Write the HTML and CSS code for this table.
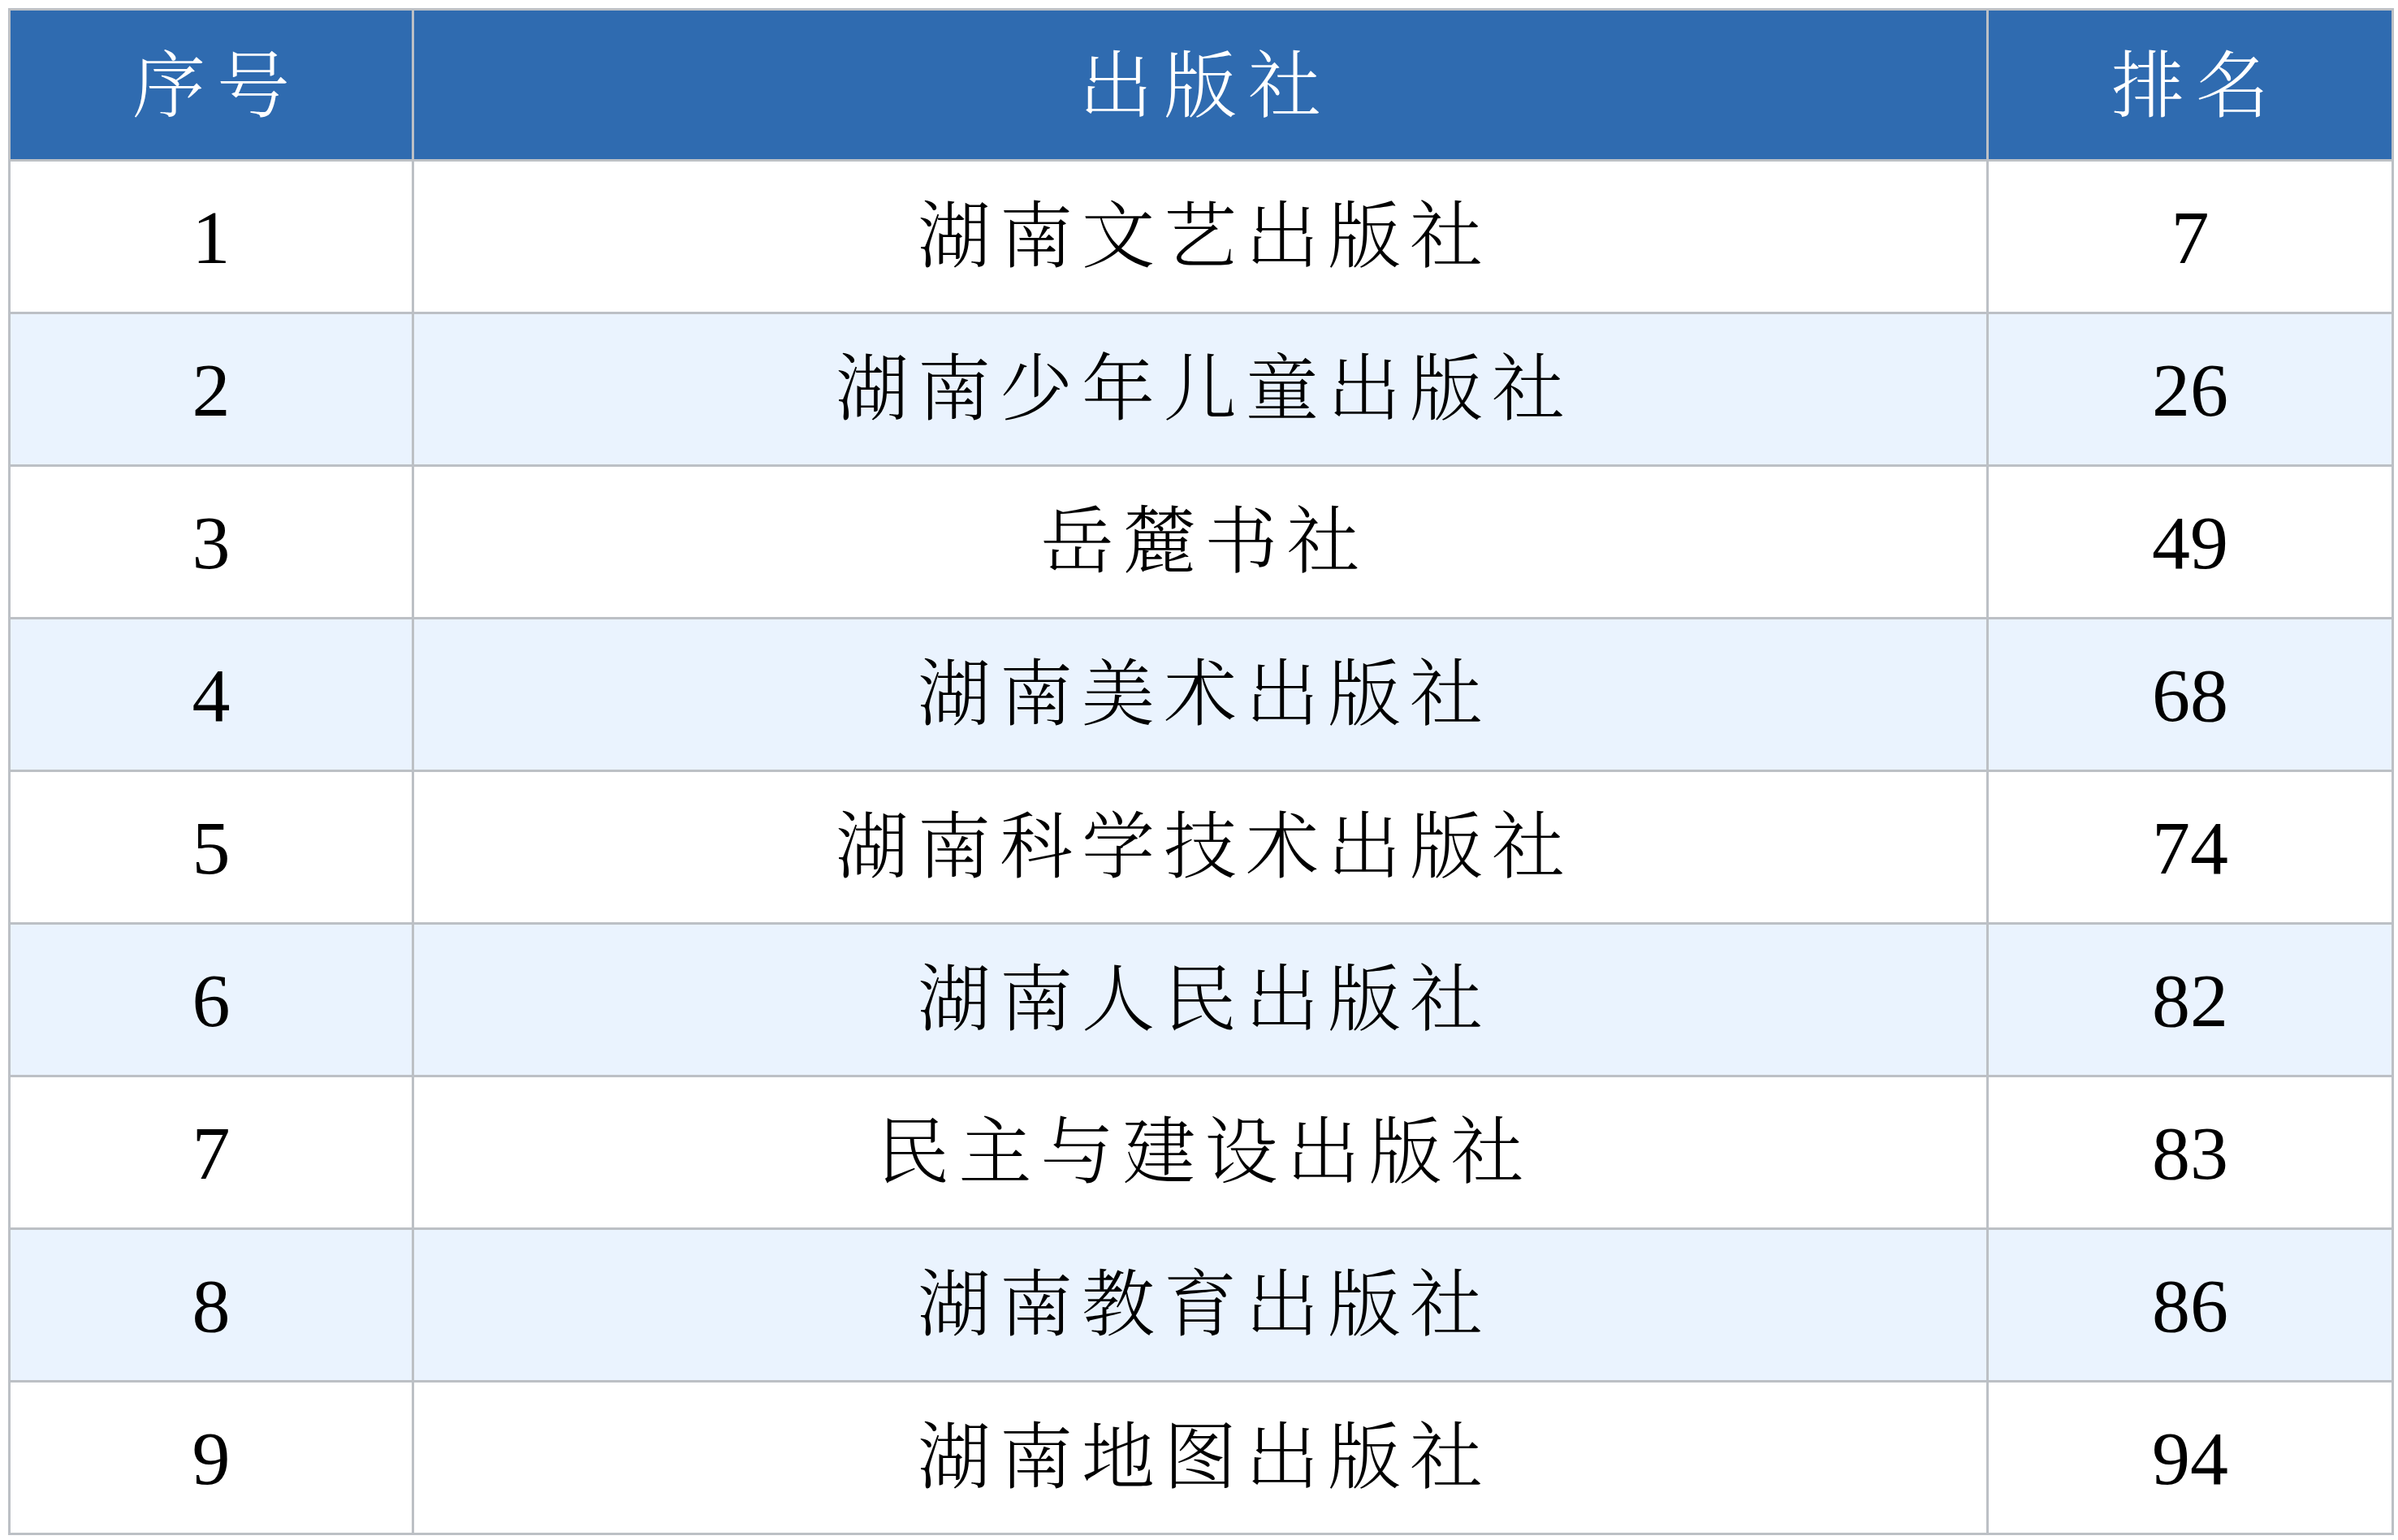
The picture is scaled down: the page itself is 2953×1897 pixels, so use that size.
FILE: index.html
```html
<!DOCTYPE html>
<html lang="zh-CN">
<head>
<meta charset="utf-8">
<title>出版社排名</title>
<link rel="stylesheet" href="styles.css">
</head>
<body>
<table class="rank-table">
  <colgroup>
    <col class="col-no">
    <col class="col-name">
    <col class="col-rank">
  </colgroup>
  <thead>
    <tr class="head-row">
      <th>序号</th>
      <th>出版社</th>
      <th>排名</th>
    </tr>
  </thead>
  <tbody>
    <tr><td class="num">1</td><td class="name">湖南文艺出版社</td><td class="num">7</td></tr>
    <tr><td class="num">2</td><td class="name">湖南少年儿童出版社</td><td class="num">26</td></tr>
    <tr><td class="num">3</td><td class="name">岳麓书社</td><td class="num">49</td></tr>
    <tr><td class="num">4</td><td class="name">湖南美术出版社</td><td class="num">68</td></tr>
    <tr><td class="num">5</td><td class="name">湖南科学技术出版社</td><td class="num">74</td></tr>
    <tr><td class="num">6</td><td class="name">湖南人民出版社</td><td class="num">82</td></tr>
    <tr><td class="num">7</td><td class="name">民主与建设出版社</td><td class="num">83</td></tr>
    <tr><td class="num">8</td><td class="name">湖南教育出版社</td><td class="num">86</td></tr>
    <tr><td class="num">9</td><td class="name">湖南地图出版社</td><td class="num">94</td></tr>
  </tbody>
</table>
</body>
</html>
```

FILE: styles.css
```css
html, body {
  margin: 0;
  padding: 0;
  background: #ffffff;
}

body {
  padding: 10px 8px 0 10px;
}

.rank-table {
  width: 2935px;
  border-collapse: collapse;
  table-layout: fixed;
  border: 3px solid #bcc0c5;
  font-family: "Liberation Serif", "Noto Serif CJK SC", "Noto Sans CJK SC", serif;
  color: #000000;
}

.col-no { width: 497px; }
.col-name { width: 1939px; }
.col-rank { width: 499px; }

.rank-table th,
.rank-table td {
  border: 3px solid #bcc0c5;
  text-align: center;
  vertical-align: middle;
  padding: 0;
}

.head-row {
  height: 186px;
  background: #2f6bb0;
}

.head-row th {
  color: #ffffff;
  font-weight: 300;
  font-size: 90px;
  letter-spacing: 14px;
  text-indent: 14px;
  line-height: 1;
  padding-top: 4px;
}

.rank-table tbody tr {
  height: 188px;
  background: #ffffff;
}

.rank-table tbody tr:nth-child(even) {
  background: #eaf3fe;
}

.num {
  font-size: 94px;
  line-height: 1;
  padding-top: 6px;
}

.name {
  font-weight: 300;
  font-size: 90px;
  letter-spacing: 11px;
  text-indent: 11px;
  line-height: 1;
  padding-top: 6px;
}
```
